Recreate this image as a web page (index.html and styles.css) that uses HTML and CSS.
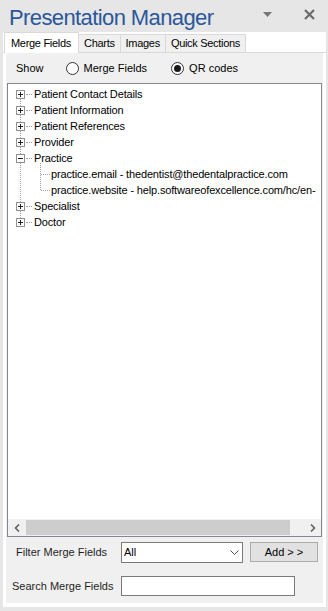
FILE: index.html
```html
<!DOCTYPE html>
<html lang="en">
  <head>
    <meta charset="UTF-8" />
    <meta name="viewport" content="width=device-width, initial-scale=1.0" />
    <link rel="stylesheet" href="styles.css">
  </head>
  <body>
    <div class="titlebar">
      <span class="title">Presentation Manager</span>
      <svg class="pin" width="9" height="5" viewBox="0 0 9 5">
        <polygon points="0,0 9,0 4.5,5" fill="#767676" />
      </svg>
      <svg class="close" width="11" height="11" viewBox="0 0 11 11">
        <path d="M1 1 L10 10 M10 1 L1 10" stroke="#6a6a6a" stroke-width="2.2" />
      </svg>
    </div>

    <div class="panel">
      <div class="tabs">
        <div class="tab active">Merge Fields</div>
        <div class="tab">Charts</div>
        <div class="tab">Images</div>
        <div class="tab">Quick Sections</div>
      </div>

      <div class="page">
        <div class="inner">
          <div class="show-row">
            <span class="show-label">Show</span>
            <label class="option"><span class="radio"></span>Merge Fields</label>
            <label class="option"><span class="radio checked"></span>QR codes</label>
          </div>

          <div class="tree">
            <div class="tree-body">
              <ul class="nodes">
                <li class="node"><span class="box plus"></span><span class="dash"></span><span class="text">Patient Contact Details</span></li>
                <li class="node"><span class="box plus"></span><span class="dash"></span><span class="text">Patient Information</span></li>
                <li class="node"><span class="box plus"></span><span class="dash"></span><span class="text">Patient References</span></li>
                <li class="node"><span class="box plus"></span><span class="dash"></span><span class="text">Provider</span></li>
                <li class="node"><span class="box"></span><span class="dash"></span><span class="text">Practice</span></li>
                <li>
                  <ul class="children">
                    <li class="leaf"><span class="dash long"></span><span class="text">practice.email - thedentist@thedentalpractice.com</span></li>
                    <li class="leaf"><span class="dash long"></span><span class="text">practice.website - help.softwareofexcellence.com/hc/en-</span></li>
                  </ul>
                </li>
                <li class="node"><span class="box plus"></span><span class="dash"></span><span class="text">Specialist</span></li>
                <li class="node"><span class="box plus"></span><span class="dash"></span><span class="text">Doctor</span></li>
              </ul>
            </div>
            <div class="hscroll">
              <div class="arrow">
                <svg width="6" height="8" viewBox="0 0 6 8"><polyline points="5,0.5 1.5,4 5,7.5" fill="none" stroke="#606060" stroke-width="1.6" /></svg>
              </div>
              <div class="thumb"></div>
              <div class="arrow right">
                <svg width="6" height="8" viewBox="0 0 6 8"><polyline points="1,0.5 4.5,4 1,7.5" fill="none" stroke="#606060" stroke-width="1.6" /></svg>
              </div>
            </div>
          </div>

          <div class="filter-row">
            <span class="field-label">Filter Merge Fields</span>
            <div class="select">
              <span>All</span>
              <svg width="9" height="5" viewBox="0 0 9 5"><polyline points="0.5,0.5 4.5,4.5 8.5,0.5" fill="none" stroke="#505050" stroke-width="1" /></svg>
            </div>
            <div class="button">Add &gt; &gt;</div>
          </div>

          <div class="search-row">
            <span class="field-label search">Search Merge Fields</span>
            <div class="input"></div>
          </div>
        </div>
      </div>
    </div>
  </body>
</html>
```

FILE: styles.css
```css
* {
  box-sizing: border-box;
}

body {
  margin: 0;
  background-color: #e6e6e6;
  font-family: "Liberation Sans", Arial, sans-serif;
  font-size: 11px;
  color: #000;
}

.titlebar {
  height: 32px;
  display: flex;
  align-items: flex-start;
  padding-right: 13px;
}

.title {
  flex: 1;
  margin-top: 4px;
  padding-left: 9px;
  line-height: 28px;
  font-size: 22px;
  letter-spacing: -0.6px;
  color: #2b579a;
}

.pin {
  margin-top: 12px;
}

.close {
  margin-top: 9px;
  margin-left: 32px;
}

.panel {
  margin-left: 3px;
  width: 323px;
  height: 575px;
  background-color: #fff;
  display: flex;
  flex-direction: column;
}

.tabs {
  height: 20px;
  display: flex;
  align-items: flex-end;
  padding-left: 1px;
}

.tab {
  height: 18px;
  line-height: 17px;
  padding: 0 5px;
  border: 1px solid #d9d9d9;
  border-bottom: none;
  border-left: none;
  background-color: #f0f0f0;
  letter-spacing: -0.3px;
}

.tab.active {
  position: relative;
  z-index: 1;
  height: 21px;
  line-height: 20px;
  margin-bottom: -1px;
  padding: 0 7px 0 6px;
  background-color: #fff;
  border-left: 1px solid #d9d9d9;
}

.page {
  flex: 1;
  border-top: 1px solid #d9d9d9;
  padding: 0 3px 4px 3px;
}

.inner {
  height: 100%;
  background-color: #f0f0f0;
  display: flex;
  flex-direction: column;
}

.show-row {
  height: 30px;
  flex-shrink: 0;
  display: flex;
  align-items: center;
  padding-left: 10px;
}

.show-label {
  margin-right: 22px;
}

.option {
  display: flex;
  align-items: center;
  margin-right: 24px;
}

.radio {
  width: 13px;
  height: 13px;
  border: 1px solid #333;
  border-radius: 50%;
  background-color: #fff;
  margin-right: 5px;
  display: flex;
  align-items: center;
  justify-content: center;
}

.radio.checked::after {
  content: "";
  width: 7px;
  height: 7px;
  border-radius: 50%;
  background-color: #1a1a1a;
}

.tree {
  margin-left: 1px;
  width: 315px;
  height: 454px;
  flex-shrink: 0;
  border: 1px solid #828790;
  background-color: #fff;
  display: flex;
  flex-direction: column;
}

.tree-body {
  flex: 1;
  overflow: hidden;
  padding-top: 2px;
}

.nodes,
.children {
  list-style: none;
  margin: 0;
  padding: 0;
  position: relative;
}

.nodes::before {
  content: "";
  position: absolute;
  left: 12px;
  top: 8px;
  bottom: 8px;
  border-left: 1px dotted #a0a0a0;
}

.children::before {
  content: "";
  position: absolute;
  left: 32px;
  top: -3px;
  height: 27px;
  border-left: 1px dotted #a0a0a0;
}

.node,
.leaf {
  height: 16px;
  display: flex;
  align-items: center;
  white-space: nowrap;
  letter-spacing: -0.15px;
}

.node {
  padding-left: 8px;
}

.leaf {
  padding-left: 33px;
}

.box {
  position: relative;
  z-index: 1;
  flex-shrink: 0;
  width: 9px;
  height: 9px;
  border: 1px solid #919191;
  background-color: #fff;
}

.box::before {
  content: "";
  position: absolute;
  left: 1px;
  top: 3px;
  width: 5px;
  height: 1px;
  background-color: #222;
}

.box.plus::after {
  content: "";
  position: absolute;
  left: 3px;
  top: 1px;
  width: 1px;
  height: 5px;
  background-color: #222;
}

.dash {
  flex-shrink: 0;
  width: 6px;
  height: 1px;
  margin-left: 1px;
  border-top: 1px dotted #a0a0a0;
}

.dash.long {
  width: 9px;
  margin-left: 0;
}

.text {
  flex-shrink: 0;
  margin-left: 2px;
}

.leaf .text {
  margin-left: 1px;
}

.hscroll {
  height: 17px;
  flex-shrink: 0;
  display: flex;
  background-color: #f0f0f0;
}

.arrow {
  width: 17px;
  display: flex;
  align-items: center;
  justify-content: center;
}

.thumb {
  width: 264px;
  margin: 1px;
  background-color: #cdcdcd;
}

.arrow.right {
  margin-left: auto;
}

.filter-row {
  margin-top: 4px;
  height: 22px;
  display: flex;
  align-items: center;
}

.field-label {
  width: 115px;
  padding-left: 10px;
  color: #1e1e1e;
}

.field-label.search {
  padding-left: 6px;
}

.select {
  width: 122px;
  height: 21px;
  border: 1px solid #7a7a7a;
  background-color: #fff;
  display: flex;
  align-items: center;
  justify-content: space-between;
  padding: 0 3px 0 2px;
}

.button {
  margin-left: 7px;
  width: 68px;
  height: 20px;
  line-height: 18px;
  border: 1px solid #adadad;
  background-color: #e1e1e1;
  text-align: center;
}

.search-row {
  margin-top: 13px;
  height: 20px;
  display: flex;
  align-items: center;
}

.input {
  width: 174px;
  height: 20px;
  border: 1px solid #7a7a7a;
  background-color: #fff;
}
```
